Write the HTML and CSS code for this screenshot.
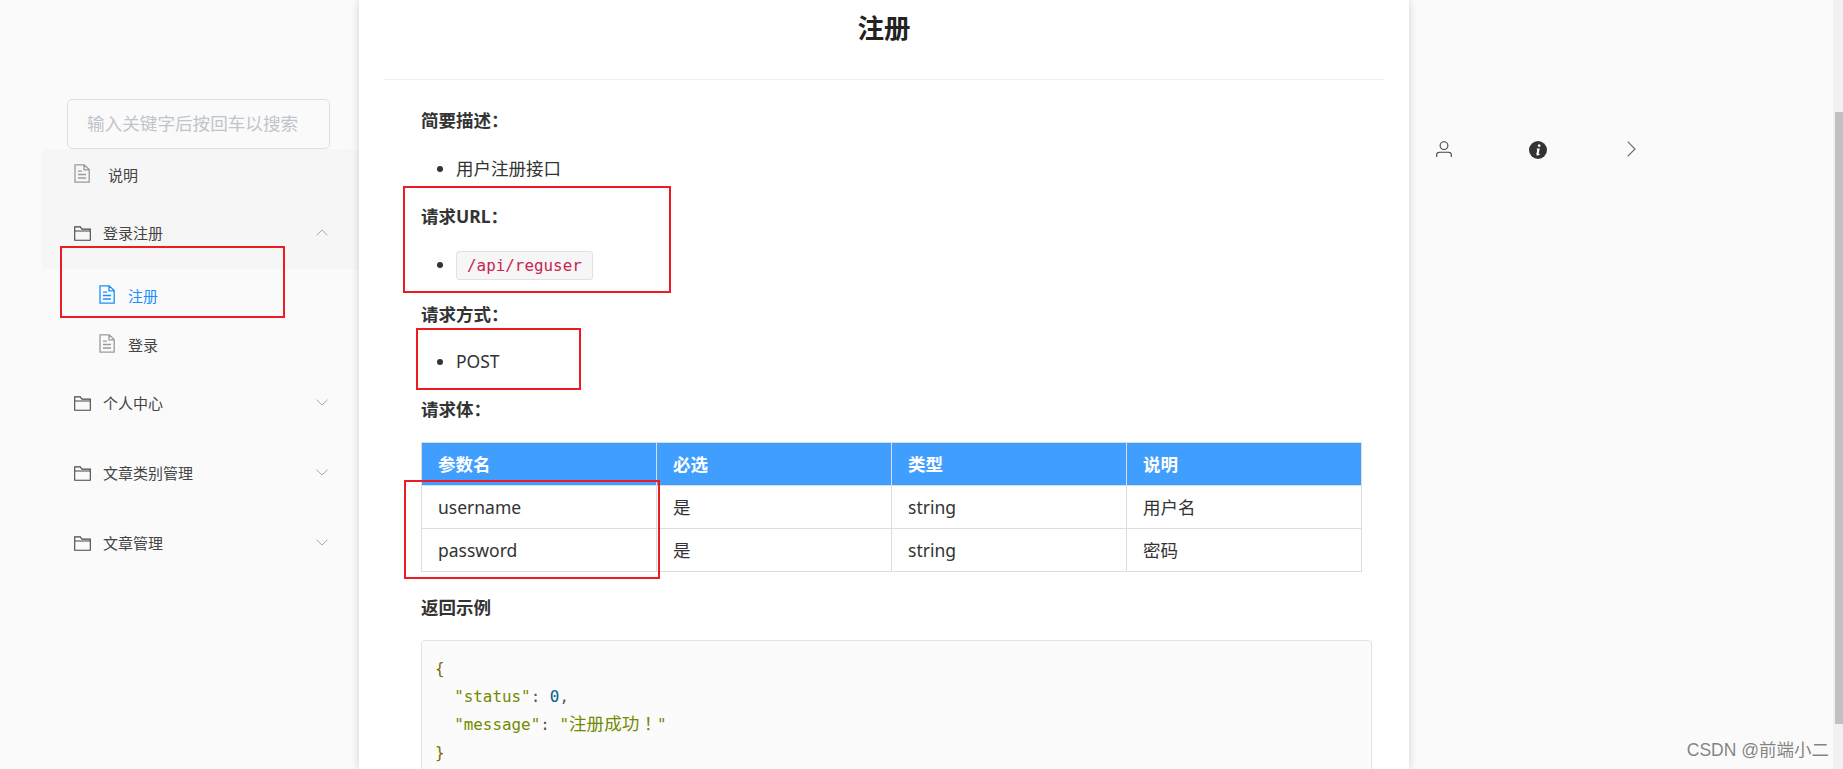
FILE: index.html
```html
<!DOCTYPE html>
<html lang="zh">
<head>
<meta charset="utf-8">
<title>注册</title>
<link rel="stylesheet" href="styles.css">
</head>
<body>
<svg class="defs" width="0" height="0" aria-hidden="true">
  <symbol id="doc" viewBox="0 0 16 19"><path d="M1 .8h9.2L15.2 5.6V18.2H1z M10 1v4.8h5 M4 7.2h4 M4 10.5h8 M4 14h8" fill="none" stroke="currentColor" stroke-width="1.3"/></symbol>
  <symbol id="folder" viewBox="0 0 17 15"><path d="M.7 14.3V.9h5.6l1.7 2.2h8.3v11.2z M.7 5h15.6" fill="none" stroke="currentColor" stroke-width="1.1"/></symbol>
  <symbol id="chev" viewBox="0 0 12 7"><path d="M.5 .7L6 6L11.5 .7" fill="none" stroke="currentColor" stroke-width="1"/></symbol>
</svg>
<div class="page">
  <aside class="sidebar">
    <div class="search">输入关键字后按回车以搜索</div>
    <nav class="menu">
      <div class="opened">
        <div class="item item-top"><svg class="ic-doc doc-up"><use href="#doc"/></svg><span class="lbl-top">说明</span></div>
        <div class="item item-group"><svg class="ic-folder"><use href="#folder"/></svg><span class="lbl">登录注册</span><svg class="ic-chev up"><use href="#chev"/></svg></div>
      </div>
      <div class="sub sub-first active"><svg class="ic-doc doc-up"><use href="#doc"/></svg><span class="lbl-top">注册</span></div>
      <div class="sub sub-second"><svg class="ic-doc doc-up"><use href="#doc"/></svg><span class="lbl-top">登录</span></div>
      <div class="item item-closed"><svg class="ic-folder"><use href="#folder"/></svg><span class="lbl">个人中心</span><svg class="ic-chev"><use href="#chev"/></svg></div>
      <div class="item item-closed"><svg class="ic-folder"><use href="#folder"/></svg><span class="lbl">文章类别管理</span><svg class="ic-chev"><use href="#chev"/></svg></div>
      <div class="item item-closed"><svg class="ic-folder"><use href="#folder"/></svg><span class="lbl">文章管理</span><svg class="ic-chev"><use href="#chev"/></svg></div>
    </nav>
  </aside>
  <main class="doc">
    <h1 class="title">注册</h1>
    <article class="content">
      <p class="head">简要描述：</p>
      <ul><li>用户注册接口</li></ul>
      <p class="head">请求URL：</p>
      <ul><li><code class="inline">/api/reguser</code></li></ul>
      <p class="head">请求方式：</p>
      <ul class="ul-post"><li>POST</li></ul>
      <p class="head head-tbl">请求体：</p>
      <table>
        <thead><tr><th>参数名</th><th>必选</th><th>类型</th><th>说明</th></tr></thead>
        <tbody>
          <tr><td>username</td><td>是</td><td>string</td><td>用户名</td></tr>
          <tr><td>password</td><td>是</td><td>string</td><td>密码</td></tr>
        </tbody>
      </table>
      <p class="head head-code">返回示例</p>
      <pre class="code"><span class="br">{</span>
  <span class="str">"status"</span><span class="pn">:</span> <span class="num">0</span><span class="pn">,</span>
  <span class="str">"message"</span><span class="pn">:</span> <span class="str">"<span class="cjk">注册成功</span><span class="cjk-bang" lang="zh-Hant">！</span>"</span>
<span class="br">}</span></pre>
    </article>
  </main>
  <aside class="right">
    <svg class="r-user" viewBox="0 0 16 16"><circle cx="8" cy="4.6" r="3.9" fill="none" stroke="#444" stroke-width="1.1"/><path d="M.7 16v-2.2q0-2.6 2.8-2.6h9q2.8 0 2.8 2.6V16" fill="none" stroke="#444" stroke-width="1.1"/></svg>
    <svg class="r-info" viewBox="0 0 18 18"><circle cx="9" cy="9" r="9" fill="#333"/><path d="M7.800 7.400h3l-1.200 5.300q-.1.500.4.300l.7-.4.200.6q-1.500 1.300-2.700 1.200-1.100-.1-.8-1.300l.8-3.900q.1-.9-.6-1z M10.200 3.200a1.400 1.400 0 1 1-.01 0z" fill="#fff"/></svg>
    <svg class="r-next" viewBox="0 0 9 16"><path d="M.7 .7L8 8L.7 15.300" fill="none" stroke="#666" stroke-width="1.1"/></svg>
  </aside>
  <div class="track"><div class="thumb"></div></div>
</div>
<div class="mark mark-a"></div>
<div class="mark mark-b"></div>
<div class="mark mark-c"></div>
<div class="mark mark-d"></div>
<div class="watermark">CSDN @前端小二</div>
</body>
</html>
```
FILE: styles.css
```css
html, body {
  margin: 0;
  height: 769px;
  overflow: hidden;
  background: #fafafa;
  color: #333;
  font-family: "Noto Sans", "Noto Sans CJK SC", sans-serif;
}
.defs { position: absolute; }
.page { display: flex; height: 769px; }

/* sidebar */
.sidebar { width: 359px; flex: none; padding-top: 99px; box-sizing: border-box; }
.search {
  width: 263px; height: 50px; margin-left: 67px; box-sizing: border-box;
  border: 1px solid #dcdfe6; border-radius: 5px;
  padding-left: 19px; font-size: 17.6px; line-height: 46px; color: #c0c4cc;
}
.menu { margin-left: 42px; font-size: 15px; color: #444; }
.opened { background: #f6f6f6; height: 120px; }
.item { display: flex; align-items: center; padding-left: 32px; padding-right: 31px; }
.item-top { height: 55px; }
.item-group { height: 60px; }
.item-closed { height: 70px; }
.sub { display: flex; align-items: center; padding-left: 57px; }
.sub-first { height: 56px; }
.sub-second { height: 42px; margin-bottom: 2px; }
.active { color: #1890ff; }
.ic-doc { width: 16px; height: 19px; color: #9a9a9a; }
.active .ic-doc { color: #1890ff; }
.doc-up { margin-bottom: 6px; }
.ic-folder { width: 17px; height: 15px; color: #444; margin-bottom: 1px; }
.ic-chev { width: 12px; height: 7px; color: #aaa; margin-left: auto; margin-bottom: 4px; }
.ic-chev.up { transform: rotate(180deg); }
.lbl { margin: 0 0 4px 12px; }
.lbl-top { margin: 0 0 4px 18px; }
.sub .lbl-top { margin-left: 13px; }

/* document */
.doc {
  width: 1050px; flex: none; background: #fff;
  box-shadow: 0 0 8px rgba(0, 0, 0, .16); padding: 0 25px; box-sizing: border-box;
}
.title {
  margin: 0; height: 80px; border-bottom: 1px solid #eee; box-sizing: border-box;
  text-align: center; font-size: 26.5px; line-height: 56px; color: #222; font-weight: 700;
}
.content { padding: 27px 0 0 37px; font-size: 17.5px; }
.head { margin: 0 0 22px; line-height: 26px; font-weight: 700; }
.head-tbl { margin-bottom: 20px; }
.head-code { margin: 22px 0 20px; }
ul { margin: 0 0 22px; padding-left: 35px; line-height: 26px; }
.ul-post { margin-top: -1px; margin-bottom: 22px; }
code.inline {
  display: inline-block; margin: -3px 0 -1px; vertical-align: middle;
  font-family: "DejaVu Sans Mono", monospace; font-size: 15.9px; line-height: 27px;
  color: #c7254e; background: #f6f6f6; border: 1px solid #e1e1e1; border-radius: 3px; padding: 0 10px;
}
table { border-collapse: collapse; table-layout: fixed; width: 941px; }
th, td { border: 1px solid #ddd; height: 43px; padding: 0 0 0 16px; text-align: left; box-sizing: border-box; width: 235px; }
th { background: #409eff; color: #fff; font-weight: 700; }
.code {
  margin: 0; width: 951px; box-sizing: border-box; height: 140px; padding: 14px 13px;
  border: 1px solid #e1e1e8; border-radius: 4px; background: #fbfbfb;
  font-family: "DejaVu Sans Mono", "Noto Sans CJK SC", monospace; font-size: 15.9px; line-height: 28px; color: #555;
}
.str { color: #718c00; }
.br { color: #7d6d00; }
.pn { color: #555; }
.num { color: #005f87; }
.cjk { font-size: 17.6px; line-height: 1; font-family: "Noto Sans CJK SC", sans-serif; }
.cjk-bang { font-size: 17.6px; line-height: 1; font-family: "Noto Sans CJK TC", sans-serif; }

/* right panel */
.right { flex: 1; display: flex; align-items: flex-start; padding: 141px 0 0 27px; }
.r-user { width: 16px; height: 16px; }
.r-info { width: 18px; height: 18px; margin-left: 77px; }
.r-next { width: 9px; height: 16px; margin-left: 80px; }
.track { width: 10px; flex: none; background: #f1f1f1; padding: 112px 0 0 2px; box-sizing: border-box; }
.thumb { height: 612px; background: #c1c1c1; }

/* annotations laid over the screenshot */
.mark { position: absolute; border: 2px solid #ed1c24; box-sizing: border-box; }
.mark-a { left: 60px; top: 246px; width: 225px; height: 72px; }
.mark-b { left: 403px; top: 186px; width: 268px; height: 107px; }
.mark-c { left: 416px; top: 328px; width: 165px; height: 62px; }
.mark-d { left: 404px; top: 480px; width: 256px; height: 99px; }
.watermark {
  position: absolute; right: 14px; bottom: 8px;
  font-family: "Liberation Sans", "Noto Sans CJK SC", sans-serif; font-size: 17.5px; color: rgba(90, 90, 90, .75);
}
```
